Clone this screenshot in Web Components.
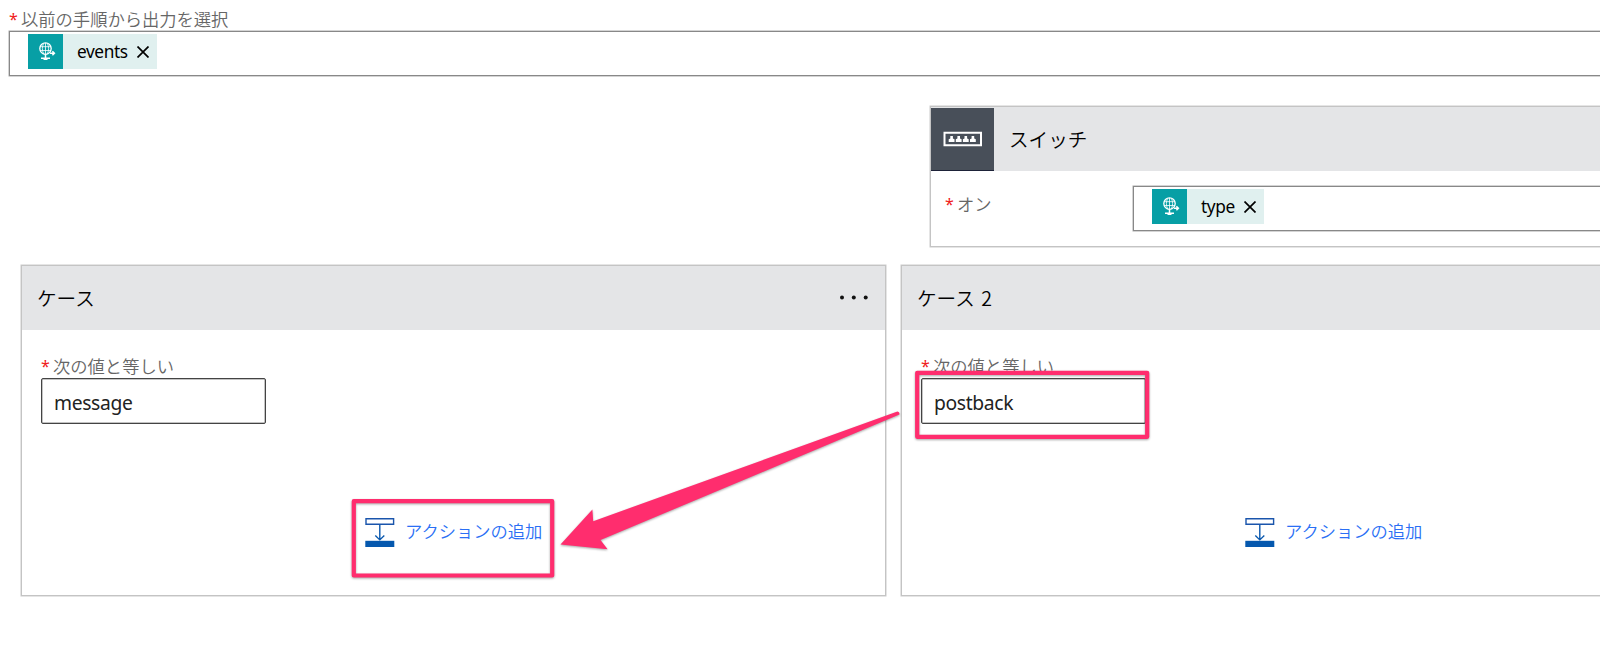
<!DOCTYPE html>
<html lang="ja">
<head>
<meta charset="utf-8">
<title>フロー</title>
<style>
html,body{margin:0;height:645px;overflow:hidden;background:#fff}
body{font-family:"Noto Sans","Noto Sans CJK JP",sans-serif;color:#111}
</style>
</head>
<body>
<flow-page></flow-page>
<script>
const define = (name, html) => {
  const t = document.createElement('template');
  t.innerHTML = html;
  customElements.define(name, class extends HTMLElement {
    constructor() {
      super();
      this.attachShadow({mode: 'open'}).append(t.content.cloneNode(true));
    }
  });
};

define('token-chip', `
<style>
:host{display:flex;width:max-content;height:35px;background:#e0f0ef;color:#000;align-items:center;font:17.3px/34px "Noto Sans",sans-serif;letter-spacing:-.42px}
.icon{width:35px;height:35px;background:#079fa5;flex:none}
.icon svg{display:block}
.text{margin-left:14px;width:var(--text-width)}
.close{margin:1px 8px 0 8.5px;flex:none}
</style>
<div class="icon"><svg width="35" height="35" viewBox="0 0 35 35" fill="none" stroke="#fff">
<circle cx="17.5" cy="14.6" r="5.7" stroke-width="1.3"/>
<path d="M12 12.7h11M12 16.5h11M17.5 9v11M15.6 9.4c-1.6 3.4-1.6 7 0 10.4M19.4 9.4c1.6 3.4 1.6 7 0 10.4" stroke-width=".8"/>
<path d="M17.5 20v4M13 24.3h9M15.5 25.3h4M22 19.2h4M24.4 17.2l2 2-2 2" stroke-width="1.5"/></svg></div>
<span class="text"><slot></slot></span>
<svg class="close" width="12" height="12" viewBox="0 0 12 12"><path d="M.5 .5 11.5 11.5M11.5 .5.5 11.5" stroke="#000" stroke-width="1.7"/></svg>`);

define('field-label', `
<style>
:host{display:flex;font:350 17.3px/24px "Noto Sans CJK JP",sans-serif;color:#666;white-space:nowrap}
i{font:16px/24px "Noto Sans",sans-serif;color:#f02020;width:12px;flex:none}
</style><i>*</i><span><slot></slot></span>`);

define('token-input', `
<style>
:host{display:block;box-sizing:border-box;height:45px;border:1px solid #888;box-shadow:0 0 0 .5px #aaa;background:#fff;padding:2px 0 0 18px}
</style><slot></slot>`);

define('value-input', `
<style>
:host{display:block;box-sizing:border-box;width:225px;height:46px;border:1px solid #444;box-shadow:inset 0 0 0 .5px #888;border-radius:2px;background:#fff;padding-left:12px;font:19.3px/47px "Noto Sans",sans-serif;letter-spacing:-.35px;color:#222}
</style><slot></slot>`);

define('add-action', `
<style>
:host{display:flex;color:#2a6ff5;font:350 17.3px/28px "Noto Sans CJK JP",sans-serif;white-space:nowrap}
svg{flex:none;margin-right:10px}
</style>
<svg width="30" height="30" viewBox="0 0 30 30" fill="none" stroke="#0a58ae"><path d="M1 1.7h27.6v5.6H1z" stroke="#1a55ac" stroke-width="1.4"/><path d="M14.8 8v15M10.3 18.6l4.5 4.3 4.5-4.3" stroke-width="1.4"/><path d="M.3 23.8h29V30H.3z" fill="#0558ae" stroke="none"/></svg>
<span><slot></slot></span>`);

define('switch-card', `
<style>
:host{display:block;box-sizing:border-box;width:866px;height:141px;border:1px solid #c4c4c4;box-shadow:0 0 0 .5px #ccc;background:#fff}
header{display:flex;height:64px;background:#e4e5e7}
.icon{width:63px;height:63px;box-sizing:border-box;margin-top:1px;background:#484f59;border-bottom:1px solid #1d2238;flex:none}
.icon svg{display:block}
h2{margin:0 0 0 15px;font:350 19.6px/64px "Noto Sans CJK JP",sans-serif;color:#000}
.row{display:flex}
field-label{width:188px;margin:21px 0 0 14px;flex:none}
token-input{width:700px;flex:none;margin-top:15px;--text-width:34.5px}
</style>
<header><div class="icon"><svg width="63" height="62" viewBox=".5 .5 63 62"><path d="M14 25.2h36.5v12.6H14z" fill="none" stroke="#fff" stroke-width="2"/><g fill="#fff"><path id="p" d="M18.2 34.5v-2.8l1.6-.6v-2.7h2.6v2.7l1.6.6v2.8z"/><use href="#p" x="7.1"/><use href="#p" x="14.2"/><use href="#p" x="21.3"/></g></svg></div><h2>スイッチ</h2></header>
<div class="row"><field-label>オン</field-label><token-input><token-chip>type</token-chip></token-input></div>`);

define('case-card', `
<style>
:host{display:flex;flex-direction:column;box-sizing:border-box;width:865px;height:331px;border:1px solid #c4c4c4;box-shadow:0 0 0 .5px #ccc;background:#fff;flex:none}
header{display:flex;justify-content:space-between;align-items:center;height:64px;background:#e4e5e7;padding:0 16px 0 15px;flex:none}
h2{margin:0;font:350 19.6px/62px "Noto Sans CJK JP",sans-serif;word-spacing:2px;color:#000}
field-label{margin:24px 0 0 19px}
value-input{margin:0 0 0 19px}
add-action{margin:93px 0 0 343px}
</style>
<header><h2><slot name="title"></slot></h2><svg width="30" height="6" viewBox="0 0 30 6" fill="#111"><circle cx="3" cy="2.5" r="2"/><circle cx="14.8" cy="2.5" r="2"/><circle cx="26.7" cy="2.5" r="2"/></svg></header>
<field-label>次の値と等しい</field-label>
<value-input><slot></slot></value-input>
<add-action>アクションの追加</add-action>`);

define('mark-overlay', `
<style>
:host{position:absolute;inset:0;pointer-events:none}
svg{display:block;filter:drop-shadow(0 1px 1px rgba(0,0,0,.35))}
</style>
<svg width="1600" height="645" viewBox="0 0 1600 645">
<g fill="none" stroke="#ff2d6e" stroke-width="4.2" stroke-linejoin="round"><rect x="353.8" y="501.2" width="198.4" height="74.3"/><rect x="917.2" y="372.8" width="230" height="64"/></g>
<path d="M560.5 544.6 592.4 509.5 593.2 521.2 897.4 411.6Q900 412 899.4 414.6L600.5 540 607.6 549.3Z" fill="#ff2d6e"/></svg>`);

define('flow-page', `
<style>
:host{display:block;position:relative;width:1600px;height:645px;overflow:hidden;background:#fff}
.top{padding:7px 0 0 9px}
.top token-input{width:1700px;--text-width:51px}
switch-card{margin:30px 0 0 930px}
.cases{display:flex;gap:15px;padding-left:21px;margin-top:18px}
</style>
<div class="top"><field-label>以前の手順から出力を選択</field-label><token-input><token-chip>events</token-chip></token-input></div>
<switch-card></switch-card>
<div class="cases"><case-card><span slot="title">ケース</span>message</case-card><case-card><span slot="title">ケース 2</span>postback</case-card></div>
<mark-overlay></mark-overlay>`);
</script>
</body>
</html>
